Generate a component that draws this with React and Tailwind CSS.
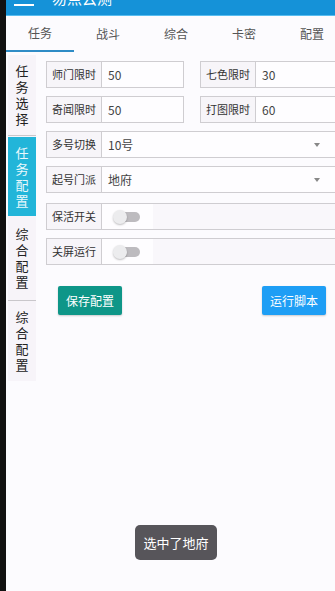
const font = { fontFamily: '"Noto Sans CJK SC", "Noto Sans", sans-serif' }

const tabs = ['任务', '战斗', '综合', '卡密', '配置']

function VText({ text }) {
  return (
    <div className="flex flex-col items-center text-[13px] leading-[16px]">
      {text.split('').map((c, i) => (
        <span key={i}>{c}</span>
      ))}
    </div>
  )
}

function InputCell({ label, value, width }) {
  return (
    <div className={`flex h-[27px] border border-[#cfcdd1] ${width}`}>
      <div className="flex w-[55px] shrink-0 items-center justify-center border-r border-[#cfcdd1] bg-[#f7f5f9] text-[11px] text-[#333]">
        {label}
      </div>
      <div className="flex flex-1 items-center bg-[#fefdff] pl-[6px] text-[12px] text-[#444]">{value}</div>
    </div>
  )
}

function SelectRow({ label, value }) {
  return (
    <div className="flex h-[27px] w-[292px] border border-[#cfcdd1]">
      <div className="flex w-[55px] shrink-0 items-center justify-center border-r border-[#cfcdd1] bg-[#f7f5f9] text-[11px] text-[#333]">
        {label}
      </div>
      <div className="flex flex-1 items-center justify-between bg-[#fefdff] pl-[6px] pr-[17px] text-[12px] text-[#444]">
        <span>{value}</span>
        <span className="h-0 w-0 border-x-[3px] border-t-[4px] border-x-transparent border-t-[#888]" />
      </div>
    </div>
  )
}

function SwitchRow({ label, className = '' }) {
  return (
    <div className={`flex h-[27px] w-[292px] border border-[#cfcdd1] bg-[#f9f7fb] ${className}`}>
      <div className="flex w-[55px] shrink-0 items-center justify-center border-r border-[#cfcdd1] bg-[#f7f5f9] text-[11px] text-[#333]">
        {label}
      </div>
      <div className="flex w-[51px] items-center bg-[#fefdff] pl-[12px]">
        <div className="relative h-[10px] w-[26px] rounded-full bg-[#bdbbbf]">
          <div className="absolute left-[-1px] top-[-2px] h-[14px] w-[14px] rounded-full bg-[#ececee] shadow-[0_1px_2px_rgba(0,0,0,0.25)]" />
        </div>
      </div>
    </div>
  )
}

export default function App() {
  return (
    <div className="relative flex h-[591px] w-[335px] overflow-hidden bg-[#fcfbfe]" style={font}>
      <div className="w-[6px] shrink-0 bg-[#111]" />
      <div className="flex min-w-0 flex-1 flex-col">
        <div className="flex h-[16px] shrink-0 items-start overflow-hidden border-b border-[#58bdf0] bg-[#1592d8]">
          <div className="ml-[8px] mt-[4px] h-[2px] w-[20px] bg-white" />
          <div className="ml-[18px] mt-[-12px] text-[15px] leading-[20px] text-white">易点云测</div>
        </div>

        <div className="flex h-[36px] shrink-0 bg-[#fcfbfe]">
          {tabs.map((t, i) => (
            <div
              key={t}
              className={`flex w-[68px] shrink-0 items-center justify-center text-[12px] text-[#555] ${
                i === 0 ? 'border-b-2 border-[#2f8cc6]' : ''
              }`}
            >
              {t}
            </div>
          ))}
        </div>

        <div className="flex flex-1">
          <div className="ml-[2px] mt-[3px] flex w-[28px] shrink-0 flex-col self-start bg-[#f7f4f9] text-[#222]">
            <div className="flex h-[81px] items-center justify-center border-b border-[#c9c7cb]">
              <VText text="任务选择" />
            </div>
            <div className="mt-[1px] flex h-[79px] items-center justify-center bg-[#22b5d9] text-[#e9f8fc]">
              <VText text="任务配置" />
            </div>
            <div className="flex h-[85px] items-center justify-center border-b border-[#c9c7cb]">
              <VText text="综合配置" />
            </div>
            <div className="flex h-[80px] items-center justify-center">
              <VText text="综合配置" />
            </div>
          </div>

          <div className="ml-[10px] flex min-w-0 flex-1 flex-col gap-[8px] overflow-hidden pt-[9px]">
            <div className="flex gap-[16px]">
              <InputCell label="师门限时" value="50" width="w-[138px] shrink-0" />
              <InputCell label="七色限时" value="30" width="w-[138px] shrink-0" />
            </div>
            <div className="flex gap-[16px]">
              <InputCell label="奇闻限时" value="50" width="w-[138px] shrink-0" />
              <InputCell label="打图限时" value="60" width="w-[138px] shrink-0" />
            </div>
            <SelectRow label="多号切换" value="10号" />
            <SelectRow label="起号门派" value="地府" />
            <SwitchRow label="保活开关" className="mt-[2px]" />
            <SwitchRow label="关屏运行" />

            <div className="mt-[13px] flex w-[280px] justify-between pl-[12px]">
              <button className="h-[29px] w-[64px] rounded-[2px] bg-[#0e9688] text-[12px] text-white shadow-[0_1px_2px_rgba(0,0,0,0.2)]">
                保存配置
              </button>
              <button className="h-[29px] w-[64px] rounded-[2px] bg-[#1e9ef5] text-[12px] text-white shadow-[0_1px_2px_rgba(0,0,0,0.2)]">
                运行脚本
              </button>
            </div>
          </div>
        </div>
      </div>

      <div className="absolute left-[135px] top-[525px] flex h-[35px] w-[82px] items-center justify-center rounded-[5px] bg-[#57555a] text-[13px] text-white">
        选中了地府
      </div>
    </div>
  )
}
